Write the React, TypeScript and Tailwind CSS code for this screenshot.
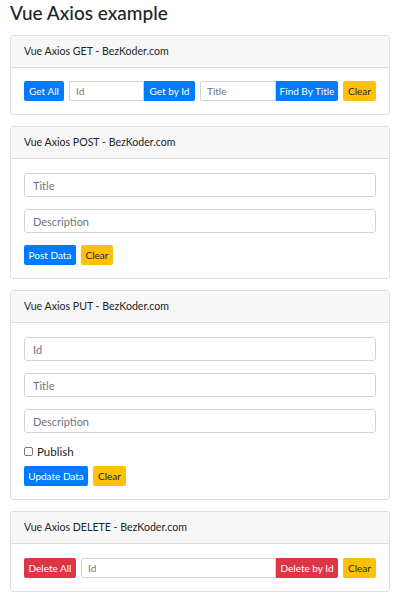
import React from "react";

const font = { fontFamily: 'Lato, "Open Sans", "Liberation Sans", sans-serif' };

function Card({ title, children, pt = "pt-[14px]" }: { title: string; children: React.ReactNode; pt?: string }) {
  return (
    <div className="border border-[#dfdfdf] rounded-[3px] bg-white overflow-hidden">
      <div className="h-[32px] px-[13px] bg-[#f7f7f7] border-b border-[#dfdfdf] flex items-center text-[10.6px] text-[#212529]">
        {title}
      </div>
      <div className={`px-[13px] ${pt} pb-[13px]`}>{children}</div>
    </div>
  );
}

function Btn({ label, color, w, grouped }: { label: string; color: "blue" | "yellow" | "red"; w: string; grouped?: boolean }) {
  const c =
    color === "blue"
      ? "bg-[#007bff] text-white"
      : color === "red"
      ? "bg-[#dc3545] text-white"
      : "bg-[#ffc107] text-[#212529]";
  return (
    <button
      className={`${c} ${w} h-[20px] shrink-0 flex items-center justify-center text-[10px] leading-none whitespace-nowrap ${
        grouped ? "rounded-r-[2px]" : "rounded-[2px]"
      }`}
    >
      {label}
    </button>
  );
}

function SmallInput({ placeholder, w }: { placeholder: string; w: string }) {
  return (
    <input
      placeholder={placeholder}
      className={`${w} h-[20px] min-w-0 border border-[#ced4da] rounded-l-[2px] px-[6px] text-[10px] text-[#495057] placeholder:text-[#6c757d] outline-none bg-white`}
    />
  );
}

function BigInput({ placeholder }: { placeholder: string }) {
  return (
    <input
      placeholder={placeholder}
      className="w-full h-[24px] border border-[#ced4da] rounded-[3px] px-[8px] text-[11px] text-[#495057] placeholder:text-[#6c757d] outline-none bg-white"
    />
  );
}

export default function App() {
  return (
    <div className="w-[400px] min-h-[600px] bg-white px-[10px] text-[#212529]" style={font}>
      <h3 className="mt-[1px] mb-[10px] h-[24px] leading-[24px] text-[19px] font-medium">Vue Axios example</h3>
      <div className="flex flex-col gap-[11px]">
        <Card title="Vue Axios GET - BezKoder.com" pt="pt-[13px]">
          <div className="flex items-center gap-[5px]">
            <Btn label="Get All" color="blue" w="w-[40px]" />
            <div className="flex w-[126px]">
              <SmallInput placeholder="Id" w="flex-1" />
              <Btn label="Get by Id" color="blue" w="w-[51px]" grouped />
            </div>
            <div className="flex w-[138px]">
              <SmallInput placeholder="Title" w="flex-1" />
              <Btn label="Find By Title" color="blue" w="w-[62px]" grouped />
            </div>
            <Btn label="Clear" color="yellow" w="w-[33px]" />
          </div>
        </Card>

        <Card title="Vue Axios POST - BezKoder.com">
          <div className="flex flex-col gap-[12px]">
            <BigInput placeholder="Title" />
            <BigInput placeholder="Description" />
            <div className="flex gap-[5px]">
              <Btn label="Post Data" color="blue" w="w-[52px]" />
              <Btn label="Clear" color="yellow" w="w-[32px]" />
            </div>
          </div>
        </Card>

        <Card title="Vue Axios PUT - BezKoder.com">
          <div className="flex flex-col gap-[12px]">
            <BigInput placeholder="Id" />
            <BigInput placeholder="Title" />
            <BigInput placeholder="Description" />
          </div>
          <label className="mt-[10px] h-[17px] flex items-center gap-[4px] text-[11.5px]">
            <span className="w-[9px] h-[9px] border border-[#767676] rounded-[2px] bg-white" />
            Publish
          </label>
          <div className="mt-[6px] flex gap-[5px]">
            <Btn label="Update Data" color="blue" w="w-[64px]" />
            <Btn label="Clear" color="yellow" w="w-[33px]" />
          </div>
        </Card>

        <Card title="Vue Axios DELETE - BezKoder.com">
          <div className="flex items-center gap-[5px]">
            <Btn label="Delete All" color="red" w="w-[52px]" />
            <div className="flex flex-1 min-w-0">
              <SmallInput placeholder="Id" w="flex-1" />
              <Btn label="Delete by Id" color="red" w="w-[62px]" grouped />
            </div>
            <Btn label="Clear" color="yellow" w="w-[33px]" />
          </div>
        </Card>
      </div>
    </div>
  );
}
